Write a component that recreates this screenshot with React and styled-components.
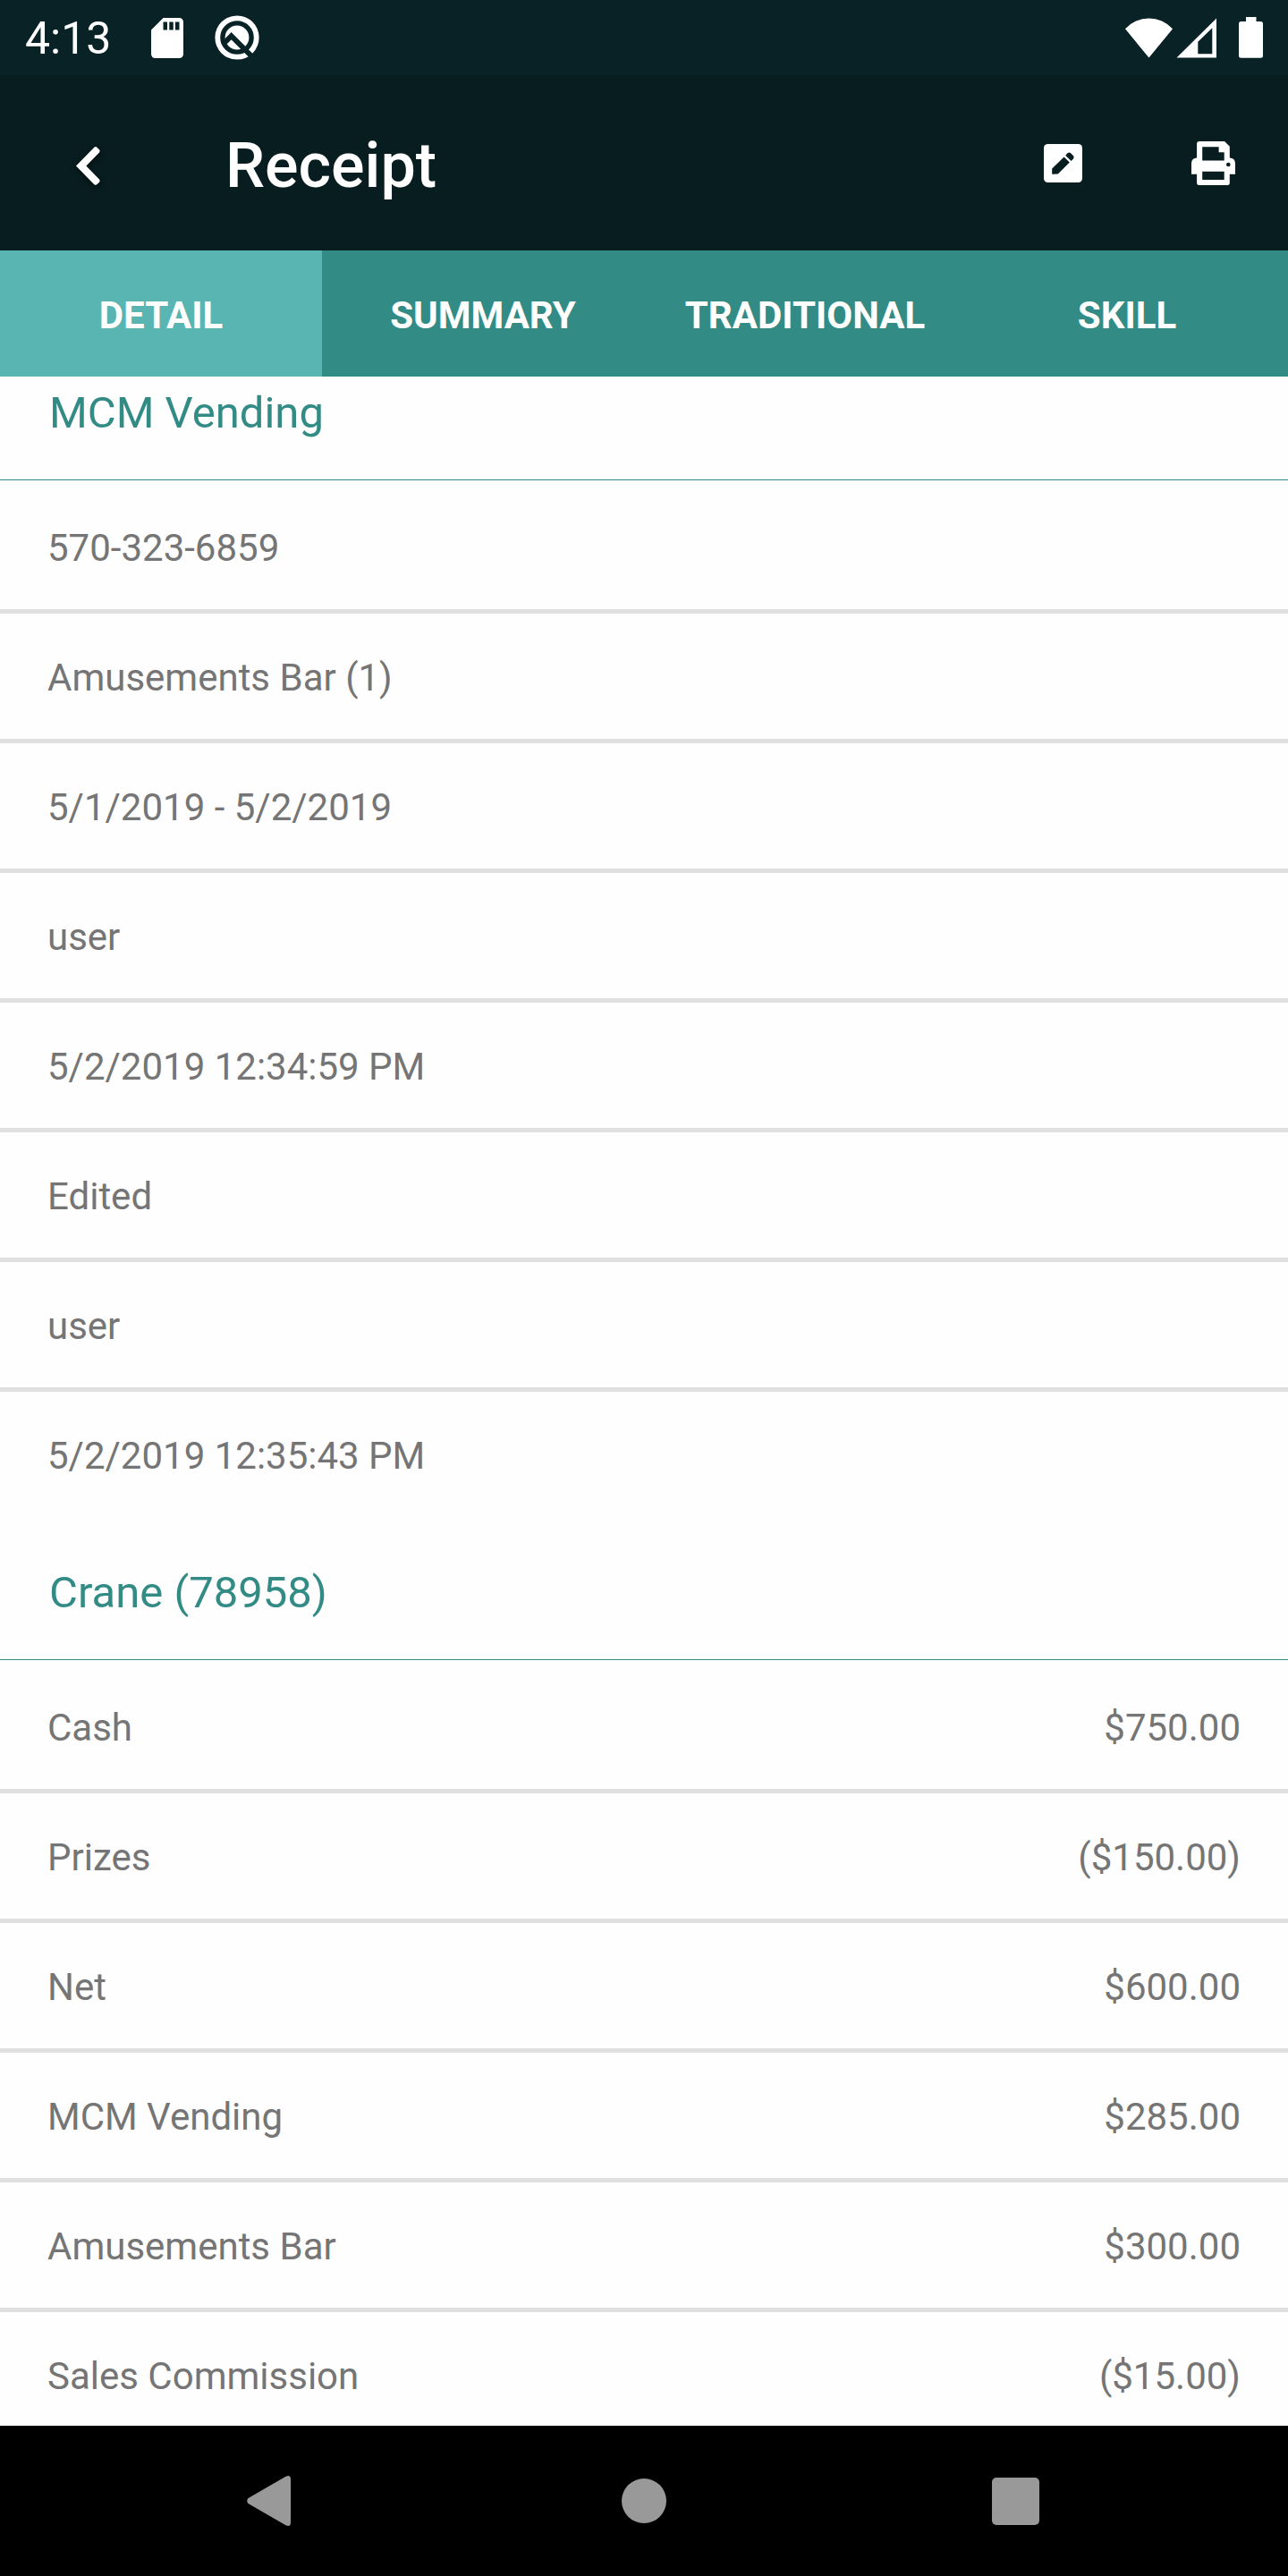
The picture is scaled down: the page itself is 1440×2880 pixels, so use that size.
import React from "react";
import styled, { createGlobalStyle } from "styled-components";

const GlobalStyle = createGlobalStyle`
  *, *::before, *::after { box-sizing: border-box; }
  body { margin: 0; background: #fefefe; font-family: Roboto, "Noto Sans", sans-serif; }
  button { margin: 0; padding: 0; border: 0; background: none; color: inherit; font: inherit; cursor: pointer; }
  svg { display: block; fill: currentColor; }
`;

const Screen = styled.div`
  height: 100vh;
  display: flex;
  flex-direction: column;
  overflow: hidden;
`;

const StatusBar = styled.div`
  flex: none;
  height: 84px;
  display: flex;
  align-items: center;
  justify-content: space-between;
  padding: 0 28px;
  background: #082226;
  color: #fff;
`;

const StatusGroup = styled.div`
  display: flex;
  align-items: center;
  gap: ${(p) => p.$gap}px;
`;

const Clock = styled.time`
  min-width: 106px;
  padding-top: 2px;
  font-size: 50px;
  line-height: 60px;
`;

const AppBar = styled.header`
  flex: none;
  height: 196px;
  display: flex;
  align-items: center;
  background: #081d20;
  color: #fff;
`;

const BarButton = styled.button`
  width: 168px;
  height: 168px;
  display: flex;
  align-items: center;
  justify-content: center;
`;

const BackButton = styled(BarButton)`
  width: 196px;
  padding-top: 6px;

  svg {
    filter: drop-shadow(0 2px 3px rgba(0, 0, 0, 0.6));
  }
`;

const Title = styled.h1`
  flex: 1;
  margin: 0;
  padding: 6px 0 0 56px;
  font-size: 70px;
  font-weight: 500;
  line-height: 84px;
`;

const Tabs = styled.nav`
  flex: none;
  height: 141px;
  display: grid;
  grid-template-columns: repeat(4, 1fr);
  background: #338b86;
`;

const Tab = styled.button`
  padding-top: 4px;
  background: ${(p) => (p.$active ? "#58b5b1" : "transparent")};
  color: #fff;
  font-size: 42px;
  font-weight: 700;
`;

const Content = styled.main`
  flex: 1;
  min-height: 0;
  overflow: hidden;
`;

const SectionTitle = styled.h2`
  margin: 0;
  height: ${(p) => (p.$first ? 116 : 160)}px;
  display: flex;
  align-items: flex-end;
  padding: 0 55px 44px;
  border-bottom: 1px solid #338b85;
  color: #338b85;
  font-size: 49px;
  font-weight: 400;
  line-height: 60px;
`;

const Rows = styled.ul`
  margin: 0;
  padding: 4px 0 0;
  list-style: none;
`;

const Row = styled.li`
  display: flex;
  justify-content: space-between;
  align-items: center;
  height: 145px;
  padding: 4px 53px 0;
  border-bottom: 5px solid #e0e0e0;
  color: #757575;
  font-size: 42px;
  line-height: 50px;

  &:last-child {
    height: 140px;
    border-bottom: 0;
  }
`;

const NavBar = styled.nav`
  flex: none;
  height: 168px;
  display: grid;
  grid-template-columns: repeat(3, 1fr);
  padding: 0 97px;
  background: #000;
  color: #999;
`;

const NavButton = styled.button`
  display: flex;
  align-items: center;
  justify-content: center;
`;

const SdCardIcon = () => (
  <svg width="36" height="45" viewBox="4 2 16 20" aria-hidden="true">
    <path d="M18 2h-8L4.02 8 4 20c0 1.1.9 2 2 2h12c1.1 0 2-.9 2-2V4c0-1.1-.9-2-2-2zm-6 6h-2V4h2v4zm3 0h-2V4h2v4zm3 0h-2V4h2v4z" />
  </svg>
);

const QIcon = () => (
  <svg width="50" height="50" viewBox="0 0 50 50" aria-hidden="true">
    <circle cx="25" cy="25" r="21.7" fill="none" stroke="currentColor" strokeWidth="5.8" />
    <circle cx="25" cy="25" r="13.4" />
    <path d="M9 32.8L18.6 23.2L44 48.6" fill="none" stroke="#082226" strokeWidth="5.8" />
  </svg>
);

const WifiIcon = () => (
  <svg width="53" height="45" viewBox="0 0 53 45" aria-hidden="true">
    <path d="M26.5 44.5L0 12.3A35.5 35.5 0 0 1 53 12.3Z" />
  </svg>
);

const SignalIcon = () => (
  <svg width="45" height="45" viewBox="0 0 45 45" aria-hidden="true">
    <path fillRule="evenodd" d="M45 .5V44.5H.5ZM24.3 26.8V40.3H40.3V11.2Z" />
  </svg>
);

const BatteryIcon = () => (
  <svg width="27" height="46" viewBox="0 0 27 46" aria-hidden="true">
    <path d="M8 0H19.5V5H24.5Q27 5 27 7.5V43.2Q27 45.7 24.5 45.7H2.5Q0 45.7 0 43.2V7.5Q0 5 2.5 5H8Z" />
  </svg>
);

const ChevronIcon = () => (
  <svg width="27" height="43" viewBox="0 0 27 43" aria-hidden="true">
    <path d="M20.3 .8Q22 -.6 23.6 .9L26 3.2Q27.2 4.8 26 6.5L11.4 21.5L26 36.4Q27.2 38.1 26 39.7L23.6 42.1Q22 43.5 20.3 42.2L0 21.5Z" />
  </svg>
);

const EditIcon = () => (
  <svg width="43" height="43" viewBox="0 0 43 43" aria-hidden="true">
    <rect width="43" height="43" rx="4.5" />
    <g fill="#081d20">
      <path d="M9.2 33.7V27.6L22.6 14.4L28.8 20.5L15.8 33.5Z" />
      <path d="M24.2 12.8L26.6 10.2Q28.2 8.7 29.9 10.1L32.9 13.1Q34.4 14.8 33 16.4L30.5 18.9Z" />
    </g>
  </svg>
);

const PrintIcon = () => (
  <svg width="49" height="49" viewBox="0 0 49 49" aria-hidden="true">
    <path
      fillRule="evenodd"
      d="M8.5 0H37L42.8 5.8V18.6Q49 19 49 25V36.7H42.8V46.5Q42.8 49 40.3 49H8.5Q6.1 49 6.1 46.5V36.7H0V25Q0 19 6.1 18.6V2.5Q6.1 0 8.5 0ZM12.2 6.2V21.4H36.7V12.2H30.6V6.2ZM12.2 33.7V43H36.7V33.7ZM41.3 23.7A2.3 2.3 0 1 0 41.3 28.3A2.3 2.3 0 1 0 41.3 23.7Z"
    />
  </svg>
);

const info = [
  "570-323-6859",
  "Amusements Bar (1)",
  "5/1/2019 - 5/2/2019",
  "user",
  "5/2/2019 12:34:59 PM",
  "Edited",
  "user",
  "5/2/2019 12:35:43 PM",
];

const crane = [
  ["Cash", "$750.00"],
  ["Prizes", "($150.00)"],
  ["Net", "$600.00"],
  ["MCM Vending", "$285.00"],
  ["Amusements Bar", "$300.00"],
  ["Sales Commission", "($15.00)"],
];

const tabs = ["DETAIL", "SUMMARY", "TRADITIONAL", "SKILL"];

export default function App() {
  const [active, setActive] = React.useState("DETAIL");
  return (
    <Screen>
      <GlobalStyle />
      <StatusBar>
        <StatusGroup $gap={35}>
          <Clock>4:13</Clock>
          <SdCardIcon />
          <QIcon />
        </StatusGroup>
        <StatusGroup $gap={25}>
          <StatusGroup $gap={4}>
            <WifiIcon />
            <SignalIcon />
          </StatusGroup>
          <BatteryIcon />
        </StatusGroup>
      </StatusBar>
      <AppBar>
        <BackButton aria-label="Back">
          <ChevronIcon />
        </BackButton>
        <Title>Receipt</Title>
        <BarButton aria-label="Edit">
          <EditIcon />
        </BarButton>
        <BarButton aria-label="Print">
          <PrintIcon />
        </BarButton>
      </AppBar>
      <Tabs>
        {tabs.map((name) => (
          <Tab key={name} $active={name === active} onClick={() => setActive(name)}>
            {name}
          </Tab>
        ))}
      </Tabs>
      <Content>
        <section>
          <SectionTitle $first>MCM Vending</SectionTitle>
          <Rows>
            {info.map((text, i) => (
              <Row key={i}>{text}</Row>
            ))}
          </Rows>
        </section>
        <section>
          <SectionTitle>Crane (78958)</SectionTitle>
          <Rows>
            {crane.map(([label, amount]) => (
              <Row key={label}>
                <span>{label}</span>
                <span>{amount}</span>
              </Row>
            ))}
          </Rows>
        </section>
      </Content>
      <NavBar>
        <NavButton aria-label="System back">
          <svg width="57" height="56" viewBox="0 0 57 56" aria-hidden="true">
            <path d="M43.5 .8Q49 -1.5 49 4V52Q49 57.5 43.5 55.2L1.5 31Q-1 28 1.5 25Z" />
          </svg>
        </NavButton>
        <NavButton aria-label="Home">
          <svg width="50" height="50" viewBox="0 0 50 50" aria-hidden="true">
            <circle cx="25" cy="25" r="25" />
          </svg>
        </NavButton>
        <NavButton aria-label="Recent apps">
          <svg width="53" height="53" viewBox="0 0 53 53" aria-hidden="true">
            <rect width="53" height="53" rx="5" />
          </svg>
        </NavButton>
      </NavBar>
    </Screen>
  );
}
